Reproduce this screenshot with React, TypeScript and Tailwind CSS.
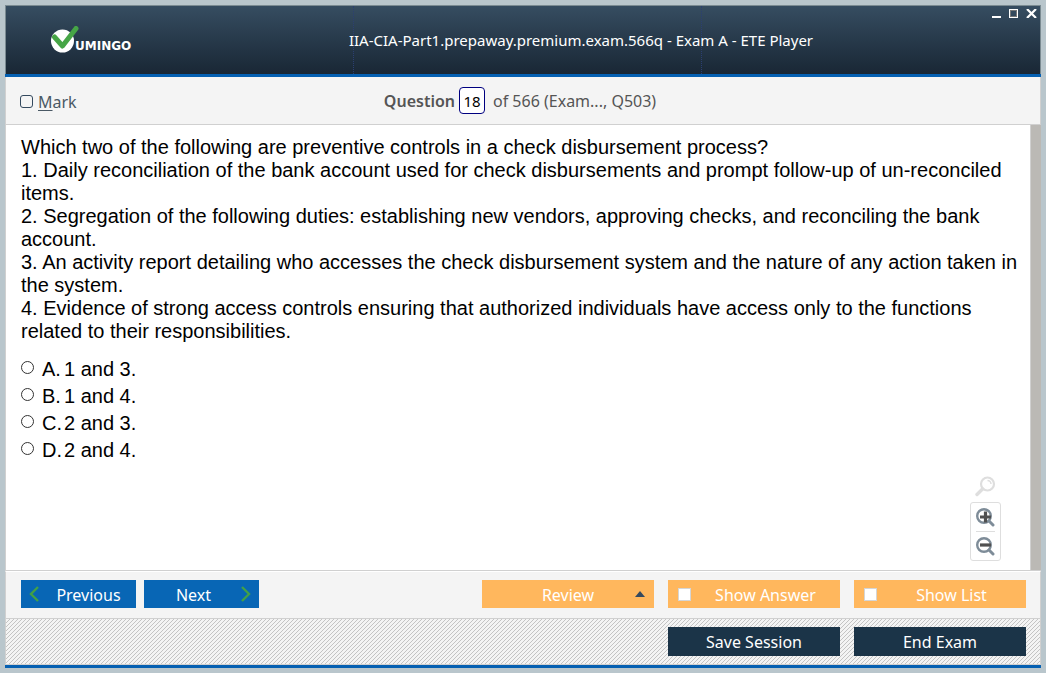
import { ReactNode, useState } from "react";

const statements = [
  "Which two of the following are preventive controls in a check disbursement process?",
  "1. Daily reconciliation of the bank account used for check disbursements and prompt follow-up of un-reconciled items.",
  "2. Segregation of the following duties: establishing new vendors, approving checks, and reconciling the bank account.",
  "3. An activity report detailing who accesses the check disbursement system and the nature of any action taken in the system.",
  "4. Evidence of strong access controls ensuring that authorized individuals have access only to the functions related to their responsibilities.",
];

const answers = [
  { letter: "A", text: "1 and 3." },
  { letter: "B", text: "1 and 4." },
  { letter: "C", text: "2 and 3." },
  { letter: "D", text: "2 and 4." },
];

function Logo() {
  return (
    <div className="flex items-end">
      <svg width="28" height="28" viewBox="0 0 28 28" aria-hidden="true">
        <circle cx="11.5" cy="15" r="11.5" fill="#fff" />
        <path d="M3.5 11 L11.5 20 L25 2.5" fill="none" stroke="#46a546" strokeWidth="5" strokeLinecap="round" strokeLinejoin="round" />
      </svg>
      <span className="-ml-1 font-['DejaVu_Sans'] text-[12px] font-bold leading-4 text-white">UMINGO</span>
    </div>
  );
}

function WindowControls() {
  return (
    <div className="absolute right-[3px] top-[3px] flex gap-2">
      <button aria-label="Minimize" className="h-[9px] w-[9px]">
        <svg width="9" height="9" viewBox="0 0 9 9" shapeRendering="crispEdges"><path d="M0 7h9v2H0z" fill="#fff" /></svg>
      </button>
      <button aria-label="Maximize" className="h-[9px] w-[9px]">
        <svg width="9" height="9" viewBox="0 0 9 9" shapeRendering="crispEdges">
          <path d="M.5.5h8v8h-8z" fill="none" stroke="#fff" />
          <path d="M1.5 1.5h6v6h-6z" fill="none" stroke="#777" />
        </svg>
      </button>
      <button aria-label="Close" className="h-[9px] w-[11px]">
        <svg width="11" height="9" viewBox="0 0 11 9"><path d="M1 0 L10 9 M10 0 L1 9" stroke="#fff" strokeWidth="2.2" /></svg>
      </button>
    </div>
  );
}

function OptionToggle({ label }: { label: string }) {
  return (
    <label className="flex h-7 w-[172px] items-center bg-[#ffb75d] text-white">
      <input type="checkbox" className="ml-2.5 h-[13px] w-[13px] shrink-0 appearance-none border border-[#d5d5d5] bg-white checked:bg-[#1b3448]" />
      <span className="flex-1 pt-0.5 text-center">{label}</span>
    </label>
  );
}

function DarkButton({ children }: { children: ReactNode }) {
  return <button className="h-[29px] w-[172px] bg-[#1b3448] text-center text-white">{children}</button>;
}

export default function App() {
  const [question, setQuestion] = useState("18");
  return (
    <div className="flex min-h-screen flex-col bg-[#b9c6cc] p-[5px] font-['Noto_Sans',sans-serif] text-[16px]">
      <div className="flex flex-1 flex-col">
        <header className="relative grid h-[69px] grid-cols-[348fr_348fr_338fr] items-center border border-b-0 border-[#7b8b92] bg-linear-to-b from-[#364d61] to-[#192735]">
          <div className="h-full min-w-0 border-r border-dotted border-[#2b3f72] pl-[45px] pt-5">
            <Logo />
          </div>
          <div className="flex h-full min-w-0 justify-center border-r border-dotted border-[#2b3f72] pl-[107px] pt-6">
            <h1 className="whitespace-nowrap text-[15px] leading-5 text-white">IIA-CIA-Part1.prepaway.premium.exam.566q - Exam A - ETE Player</h1>
          </div>
          <WindowControls />
        </header>
        <div className="h-[3px] bg-[#0560b2]" />

        <div className="grid h-12 grid-cols-[1fr_auto_1fr] items-center border-x border-b border-[#d0d0d0] bg-[#f4f4f4] pl-3.5 pr-5 text-[#555]">
          <label className="flex items-center gap-[5px] pt-0.5">
            <input type="checkbox" className="h-[13px] w-[13px] appearance-none rounded-[3px] border border-[#34495e] checked:bg-[#34495e]" />
            <span className="leading-5 text-[#4a5965]"><span className="underline underline-offset-2">M</span>ark</span>
          </label>
          <div className="flex items-center">
            <label htmlFor="question" className="font-semibold">Question</label>
            <input
              id="question"
              value={question}
              onChange={(e) => setQuestion(e.target.value)}
              className="ml-1 h-[27px] w-[26px] rounded-[4px] border border-[#000080] bg-white text-center text-[15px] text-black"
            />
            <span className="ml-2">of 566 (Exam..., Q503)</span>
          </div>
        </div>

        <main className="flex flex-1 border-b border-l border-[#d0d0d0] bg-white font-['Liberation_Sans',Arial,sans-serif] text-[20px] text-black">
          <div className="relative flex-1 border-r border-[#d0d0d0] pb-4 pl-[15px] pr-2 pt-[11px]">
            {statements.map((s) => (
              <p key={s} className="leading-[23px]">{s}</p>
            ))}
            <fieldset className="mt-3">
              {answers.map((a) => (
                <label key={a.letter} className="flex h-[27px] w-fit items-center">
                  <input type="radio" name="answer" className="mb-[3px] h-[13px] w-[13px] appearance-none rounded-full border border-[#333] bg-white checked:border-4" />
                  <span className="ml-2 w-[22px]">{a.letter}.</span>
                  <span>{a.text}</span>
                </label>
              ))}
            </fieldset>
            <div className="absolute bottom-[9px] right-[29px] flex flex-col items-center gap-[5px]">
              <svg width="21" height="21" viewBox="0 0 21 21" fill="none" stroke="#dedede" aria-hidden="true">
                <circle cx="12.5" cy="8" r="6.5" strokeWidth="2.2" />
                <path d="M7.5 13 L2 18.5" strokeWidth="3.4" strokeLinecap="round" />
                <path d="M12.5 4.5 A3.5 3.5 0 0 1 16 8" strokeWidth="1.5" />
              </svg>
              <div className="flex w-[31px] flex-col items-center rounded-[3px] border border-[#dedede] bg-white px-[5px]">
                <button aria-label="Zoom in" className="flex h-[29px] w-full items-center justify-center border-b border-[#dedede]">
                  <svg width="19" height="19" viewBox="0 0 19 19" fill="none">
                    <circle cx="8" cy="8" r="6.8" stroke="#7e8c98" strokeWidth="2.4" />
                    <path d="M13 13 L17 17" stroke="#7e8c98" strokeWidth="3" strokeLinecap="round" />
                    <path d="M4 9h11M9.5 3.5v11" stroke="#505050" strokeWidth="3.2" />
                  </svg>
                </button>
                <button aria-label="Zoom out" className="flex h-7 w-full items-center justify-center">
                  <svg width="19" height="19" viewBox="0 0 19 19" fill="none">
                    <circle cx="8" cy="8" r="6.8" stroke="#7e8c98" strokeWidth="2.4" />
                    <path d="M13 13 L17 17" stroke="#7e8c98" strokeWidth="3" strokeLinecap="round" />
                    <path d="M4 8h11" stroke="#505050" strokeWidth="3.2" />
                  </svg>
                </button>
              </div>
            </div>
          </div>
          <div className="w-2.5 bg-[#bbb9b5]" />
        </main>

        <div className="flex h-12 items-start justify-between border-x border-b border-t border-[#d0d0d0] border-t-white bg-[#f4f4f4] pl-[15px] pr-3.5 pt-2">
          <div className="flex gap-2 text-white">
            <button className="flex h-7 w-[115px] items-center bg-[#0866b5] px-2">
              <svg width="10" height="16" viewBox="0 0 10 16" fill="none" stroke="#42a048" strokeWidth="2.4"><path d="M9 1 L2 8 L9 15" /></svg>
              <span className="flex-1 pl-2.5 pt-0.5 text-center">Previous</span>
            </button>
            <button className="flex h-7 w-[115px] items-center bg-[#0866b5] px-2">
              <span className="flex-1 pr-1.5 pt-0.5 text-center">Next</span>
              <svg width="10" height="16" viewBox="0 0 10 16" fill="none" stroke="#42a048" strokeWidth="2.4"><path d="M1 1 L8 8 L1 15" /></svg>
            </button>
          </div>
          <div className="flex gap-3.5">
            <button className="flex h-7 w-[172px] items-center bg-[#ffb75d] pr-[9px] text-white">
              <span className="flex-1 pl-[19px] pt-0.5 text-center">Review</span>
              <svg width="10" height="6" viewBox="0 0 10 6"><path d="M0 6 L5 0 L10 6z" fill="#34495e" /></svg>
            </button>
            <OptionToggle label="Show Answer" />
            <OptionToggle label="Show List" />
          </div>
        </div>

        <footer className="flex h-[46px] items-center justify-end gap-3.5 border-x border-b border-[#d0d0d0] bg-[linear-gradient(135deg,#f4f4f4_44%,#c4c4c4_44%,#c4c4c4_56%,#f4f4f4_56%)] bg-size-[4px_4px] pr-3.5">
          <DarkButton>Save Session</DarkButton>
          <DarkButton>End Exam</DarkButton>
        </footer>
        <div className="h-[3px] bg-[#0560b2]" />
      </div>
    </div>
  );
}
